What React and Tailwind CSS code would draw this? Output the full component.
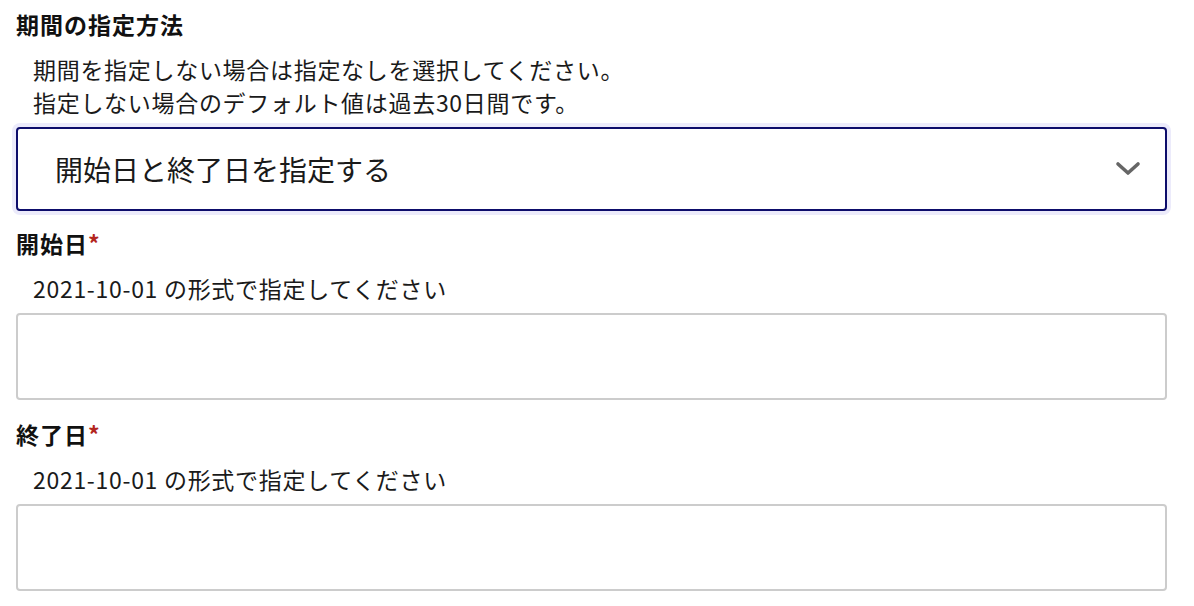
import React from 'react';

const font = { fontFamily: '"Noto Sans CJK JP", "Noto Sans", sans-serif' };

const Field = ({ label, className }) => (
  <div className={className}>
    <div className="text-[23px] leading-[33px] font-bold tracking-[1px] text-[#111]">
      {label}
      <span className="text-[#b3261e]">*</span>
    </div>
    <p className="mt-[12px] pl-[17px] text-[23px] leading-[33px] tracking-[0.7px] text-[#1a1a1a]">2021-10-01 の形式で指定してください</p>
    <input
      type="text"
      className="mt-[8px] block h-[87px] w-[1151px] rounded-[4px] border-2 border-[#cccccc] bg-white px-4 outline-none"
    />
  </div>
);

export default function App() {
  return (
    <div style={font} className="min-h-[606px] bg-white px-4 pt-[8px] text-[#1a1a1a]">
      <div className="text-[23px] leading-[33px] font-bold tracking-[1px] text-[#111]">期間の指定方法</div>
      <div className="mt-[12px] pl-[17px] text-[23px] leading-[33px] tracking-[0.7px]">
        <p>期間を指定しない場合は指定なしを選択してください。</p>
        <p>指定しない場合のデフォルト値は過去30日間です。</p>
      </div>
      <div className="mt-[8px] flex h-[84px] w-[1151px] items-center justify-between rounded-[4px] border-2 border-[#0d0d6b] bg-white pl-[37px] pr-[24px] shadow-[0_0_0_4px_#ecebfb]">
        <span className="text-[28px] text-[#1a1a1a]">開始日と終了日を指定する</span>
        <svg width="26" height="16" viewBox="0 0 26 16" fill="none">
          <path d="M3 3 L13 12 L23 3" stroke="#666" strokeWidth="3.6" strokeLinecap="round" strokeLinejoin="round" />
        </svg>
      </div>
      <Field label="開始日" className="mt-[16px]" />
      <Field label="終了日" className="mt-[18px]" />
    </div>
  );
}
